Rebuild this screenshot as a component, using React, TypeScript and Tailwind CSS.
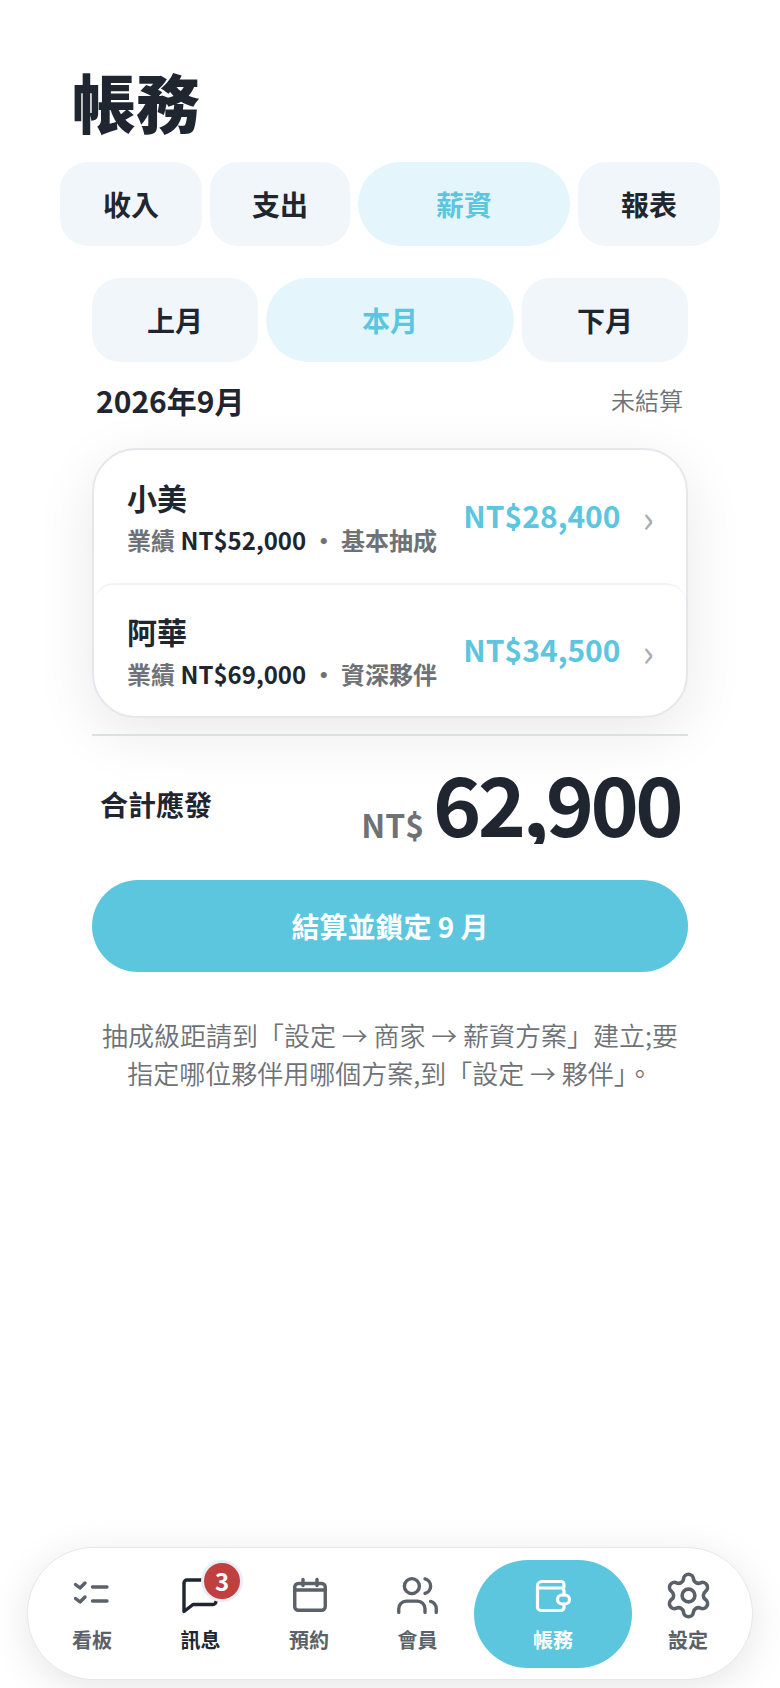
import React from 'react';
import { Users, Settings } from 'lucide-react';

const tabs = [
  { label: '收入', w: 'w-[142px]' },
  { label: '支出', w: 'w-[140px]' },
  { label: '薪資', w: 'w-[212px]', active: true },
  { label: '報表', w: 'w-[142px]' },
];

const periods = [
  { label: '上月', w: 'w-[166px]' },
  { label: '本月', w: 'w-[248px]', active: true },
  { label: '下月', w: 'w-[166px]' },
];

const payroll = [
  { name: '小美', sales: 'NT$52,000', plan: '基本抽成', pay: 'NT$28,400' },
  { name: '阿華', sales: 'NT$69,000', plan: '資深夥伴', pay: 'NT$34,500' },
];

function Pill({ label, w, active }: { label: string; w: string; active?: boolean }) {
  return (
    <button
      className={`${w} h-[84px] flex items-center justify-center text-[28px] font-bold ${
        active ? 'rounded-full bg-[#e4f6fb] text-[#5cc6df]' : 'rounded-[28px] bg-[#f0f6fa] text-[#1f2630]'
      }`}
    >
      {label}
    </button>
  );
}

function BoardIcon() {
  return (
    <svg width="40" height="40" viewBox="0 0 40 40" fill="none" stroke="currentColor" strokeWidth="3.4" strokeLinecap="round" strokeLinejoin="round">
      <path d="M3.5 8.5L8 12l5-5" />
      <path d="M3.5 22.5L8 26l5-5" />
      <path d="M20.5 11H35" />
      <path d="M20.5 25H35" />
    </svg>
  );
}

function ChatIcon() {
  return (
    <svg width="40" height="40" viewBox="0 0 40 40" fill="none" stroke="currentColor" strokeWidth="3.4" strokeLinecap="round" strokeLinejoin="round">
      <path d="M35 25.5a3 3 0 0 1-3 3H12l-9 7V7a3 3 0 0 1 3-3h26a3 3 0 0 1 3 3z" />
    </svg>
  );
}

function CalendarIcon() {
  return (
    <svg width="40" height="40" viewBox="0 0 40 40" fill="none" stroke="currentColor" strokeWidth="3.4" strokeLinecap="round" strokeLinejoin="round">
      <rect x="5.75" y="7.5" width="30.5" height="26.75" rx="3.5" />
      <path d="M5.75 14h30.5" />
      <path d="M14 3.5v6" />
      <path d="M28 3.5v6" />
    </svg>
  );
}

function WalletIcon() {
  return (
    <svg width="40" height="40" viewBox="0 0 40 40" fill="none" stroke="currentColor" strokeWidth="3.2" strokeLinecap="round" strokeLinejoin="round">
      <path d="M31 11V8.5a3 3 0 0 0-3-3H9a4.5 4.5 0 0 0-4.5 4.5v21a3.5 3.5 0 0 0 3.5 3.5h20a3 3 0 0 0 3-3V28" />
      <path d="M31 19v-4a3 3 0 0 0-3-3H6" />
      <rect x="24.5" y="19" width="12" height="9" rx="4.5" />
    </svg>
  );
}

function NavItem({ label, w, children, className }: { label: string; w: string; children: React.ReactNode; className?: string }) {
  return (
    <div className={`${w} h-[108px] flex flex-col items-center justify-between pt-[16px] pb-[14px] ${className ?? 'text-[#5b6169]'}`}>
      <div className="h-[40px] flex items-center justify-center">{children}</div>
      <span className="text-[20px] leading-[28px] font-bold">{label}</span>
    </div>
  );
}

export default function App() {
  return (
    <div className="w-[780px] h-[1688px] bg-white flex flex-col overflow-hidden [font-family:'Noto_Sans_CJK_TC','Noto_Sans',sans-serif] text-[#1f2630]">
      <h1 className="pt-[58px] pl-[72px] text-[64px] leading-[84px] font-black">帳務</h1>

      {/* tabs */}
      <div className="flex gap-[8px] pl-[60px] mt-[20px]">
        {tabs.map((t) => (
          <Pill key={t.label} {...t} />
        ))}
      </div>

      <div className="flex gap-[8px] pl-[92px] mt-[32px]">
        {periods.map((p) => (
          <Pill key={p.label} {...p} />
        ))}
      </div>

      <div className="mx-[96px] mt-[22px] h-[32px] flex items-center justify-between">
        <span className="text-[30px] leading-[32px] font-bold">2026年9月</span>
        <span className="text-[24px] leading-[32px] font-[350] text-[#6e7276] mr-[1px]">未結算</span>
      </div>

      {/* payroll card */}
      <div className="mx-[92px] mt-[32px] h-[270px] shrink-0 rounded-[44px] border-2 border-[#e5e7eb] bg-white shadow-[0_16px_60px_rgba(0,0,0,0.09)] overflow-hidden">
        {payroll.map((row, i) => (
          <div
            key={row.name}
            className={`h-[133px] pl-[33px] pr-[32px] flex items-center justify-between ${
              i > 0 ? 'border-t-2 border-[#f0f2f4] rounded-t-[20px]' : ''
            }`}
          >
            <div className="flex flex-col mt-[1px]">
              <span className="text-[30px] leading-[40px] font-semibold">{row.name}</span>
              <span className="mt-[5px] text-[24px] leading-[36px] font-semibold text-[#6e7276] whitespace-pre">
                業績 <span className="text-[#1f2630]">{row.sales}</span> ・ {row.plan}
              </span>
            </div>
            <div className="flex items-center gap-[22px] -mt-[3px]">
              <span className="text-[30px] leading-[40px] font-semibold text-[#5cc6df]">{row.pay}</span>
              <span className="text-[38px] leading-[40px] text-[#a9adb3] mt-[4px]">›</span>
            </div>
          </div>
        ))}
      </div>

      <div className="mx-[92px] mt-[16px] h-[2px] shrink-0 bg-[#dcdfe3]" />

      {/* total */}
      <div className="mx-[92px] mt-[24px] h-[84px] shrink-0 flex justify-between pl-[8px] pr-[8px]">
        <span className="text-[28px] leading-[40px] font-bold mt-[24px]">合計應發</span>
        <div className="flex items-end gap-[9px] h-[84px] overflow-hidden">
          <span className="text-[32px] leading-[40px] font-semibold text-[#6e7276]">NT$</span>
          <span className="text-[82px] leading-[84px] font-bold tracking-[-3.6px]">62,900</span>
        </div>
      </div>

      <button className="mx-[92px] mt-[36px] h-[92px] shrink-0 rounded-full bg-[#5cc6df] text-white text-[28px] font-bold">
        結算並鎖定 9 月
      </button>

      <p className="mx-[92px] mt-[44px] text-center text-[26px] leading-[38px] font-[350] text-[#6e7276]">
        抽成級距請到「設定 → 商家 → 薪資方案」建立;要指定哪位夥伴用哪個方案,到「設定 → 夥伴」。
      </p>

      {/* bottom nav */}
      <div className="mt-auto mb-[8px] mx-[27px] h-[133px] shrink-0 rounded-full border border-[#e5e7eb] bg-white shadow-[0_8px_40px_rgba(0,0,0,0.10)] flex items-center pl-[10px]">
        <NavItem label="看板" w="w-[108px]">
          <BoardIcon />
        </NavItem>
        <NavItem label="訊息" w="w-[109px]" className="text-[#1f2630] relative">
          <ChatIcon />
          <span className="absolute left-[58px] top-[3px] w-[36px] h-[36px] rounded-full bg-[#c04040] shadow-[0_0_0_3px_#e8edf6] flex items-center justify-center text-white text-[24px] font-bold">
            3
          </span>
        </NavItem>
        <NavItem label="預約" w="w-[108px]">
          <CalendarIcon />
        </NavItem>
        <NavItem label="會員" w="w-[109px]">
          <Users size={45} strokeWidth={1.8} />
        </NavItem>
        <NavItem label="帳務" w="w-[158px]" className="ml-[2px] rounded-full bg-[#5cc6df] text-white">
          <WalletIcon />
        </NavItem>
        <NavItem label="設定" w="w-[112px]">
          <Settings size={51} strokeWidth={1.7} />
        </NavItem>
      </div>
    </div>
  );
}
